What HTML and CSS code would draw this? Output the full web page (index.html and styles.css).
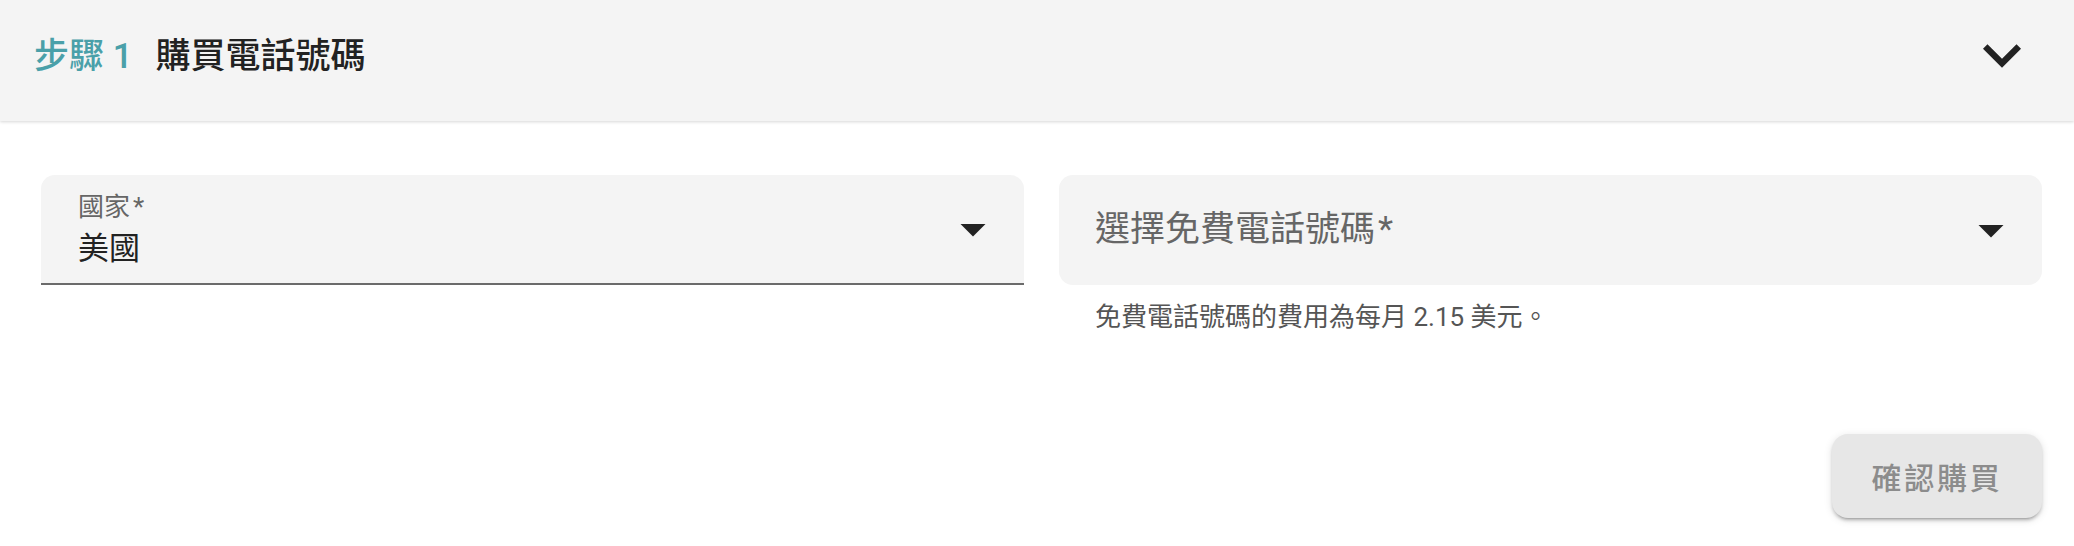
FILE: index.html
```html
<!DOCTYPE html>
<html lang="zh-Hant">
<head>
<meta charset="utf-8">
<title>步驟 1 購買電話號碼</title>
<link rel="stylesheet" href="styles.css">
</head>
<body>
<div class="panel">
  <header class="panel-header">
    <h2 class="panel-title"><span class="step">步驟 1</span><span class="title-text">購買電話號碼</span></h2>
    <svg class="expand-icon" viewBox="0 0 24 24" aria-hidden="true"><path d="M16.59 8.59L12 13.17 7.41 8.59 6 10l6 6 6-6z"/></svg>
  </header>
  <section class="panel-body">
    <div class="fields">
      <div class="field-wrap">
        <div class="field field-filled">
          <div class="field-text">
            <span class="field-label">國家<span class="req">*</span></span>
            <span class="field-value">美國</span>
          </div>
          <svg class="drop-icon" viewBox="0 0 24 24" aria-hidden="true"><path d="M7 10l5 5 5-5z"/></svg>
        </div>
      </div>
      <div class="field-wrap">
        <div class="field field-empty">
          <div class="field-text">
            <span class="field-placeholder">選擇免費電話號碼<span class="req">*</span></span>
          </div>
          <svg class="drop-icon" viewBox="0 0 24 24" aria-hidden="true"><path d="M7 10l5 5 5-5z"/></svg>
        </div>
        <p class="helper">免費電話號碼的費用為每月 2.15 美元。</p>
      </div>
    </div>
    <div class="actions">
      <button class="confirm-btn" type="button" disabled>確認購買</button>
    </div>
  </section>
</div>
</body>
</html>
```

FILE: styles.css
```css
* { box-sizing: border-box; }

html, body {
  margin: 0;
  padding: 0;
  background: #ffffff;
}

body {
  font-family: Roboto, "Noto Sans CJK TC", "Noto Sans CJK SC", sans-serif;
  color: #222222;
}

.panel {
  width: 2074px;
  height: 546px;
  overflow: hidden;
}

.panel-header {
  height: 121px;
  background: #f4f4f4;
  box-shadow: 0 1px 3px rgba(0, 0, 0, 0.16);
  display: flex;
  align-items: center;
  justify-content: space-between;
  padding: 0 34px 8px 34px;
  position: relative;
  z-index: 1;
}

.panel-title {
  margin: 0;
  font-size: 35px;
  line-height: 40px;
  font-weight: 500;
  display: flex;
  align-items: center;
}

.step {
  color: #4aa0a9;
  margin-right: 23px;
}

.title-text {
  color: #222222;
}

.expand-icon {
  width: 76px;
  height: 76px;
  fill: #222222;
  margin-top: -3px;
}

.panel-body {
  padding: 54px 32px 0 41px;
}

.fields {
  display: grid;
  grid-template-columns: 1fr 1fr;
  column-gap: 35px;
  align-items: start;
}

.field {
  height: 110px;
  background: #f4f4f4;
  display: flex;
  align-items: center;
  justify-content: space-between;
  padding: 0 21px 0 37px;
}

.field-filled {
  border-radius: 14px 14px 0 0;
  border-bottom: 2px solid #6b6b6b;
}

.field-empty {
  border-radius: 14px;
  padding-left: 36px;
}

.field-text {
  display: flex;
  flex-direction: column;
}

.req {
  margin-left: 3px;
}

.field-label {
  font-size: 26px;
  line-height: 30px;
  color: #666666;
  margin-bottom: 9px;
}

.field-value {
  font-size: 31px;
  line-height: 36px;
  color: #222222;
}

.field-placeholder {
  font-size: 35px;
  line-height: 40px;
  color: #666666;
}

.drop-icon {
  width: 60px;
  height: 60px;
  fill: #222222;
  flex: none;
}

.helper {
  margin: 15px 0 0 0;
  padding-left: 36px;
  font-size: 26px;
  line-height: 35px;
  color: #555555;
}

.actions {
  display: flex;
  justify-content: flex-end;
  margin-top: 99px;
}

.confirm-btn {
  height: 84px;
  width: 210px;
  border: none;
  border-radius: 16px;
  background: #e7e7e7;
  color: #8c8c8c;
  font-family: Roboto, "Noto Sans CJK TC", sans-serif;
  font-size: 30px;
  font-weight: 500;
  letter-spacing: 2.7px;
  box-shadow: 0 4px 2px -3px rgba(0, 0, 0, 0.2), 0 3px 3px 0 rgba(0, 0, 0, 0.14), 0 2px 8px 0 rgba(0, 0, 0, 0.12);
  padding: 0;
}
```
